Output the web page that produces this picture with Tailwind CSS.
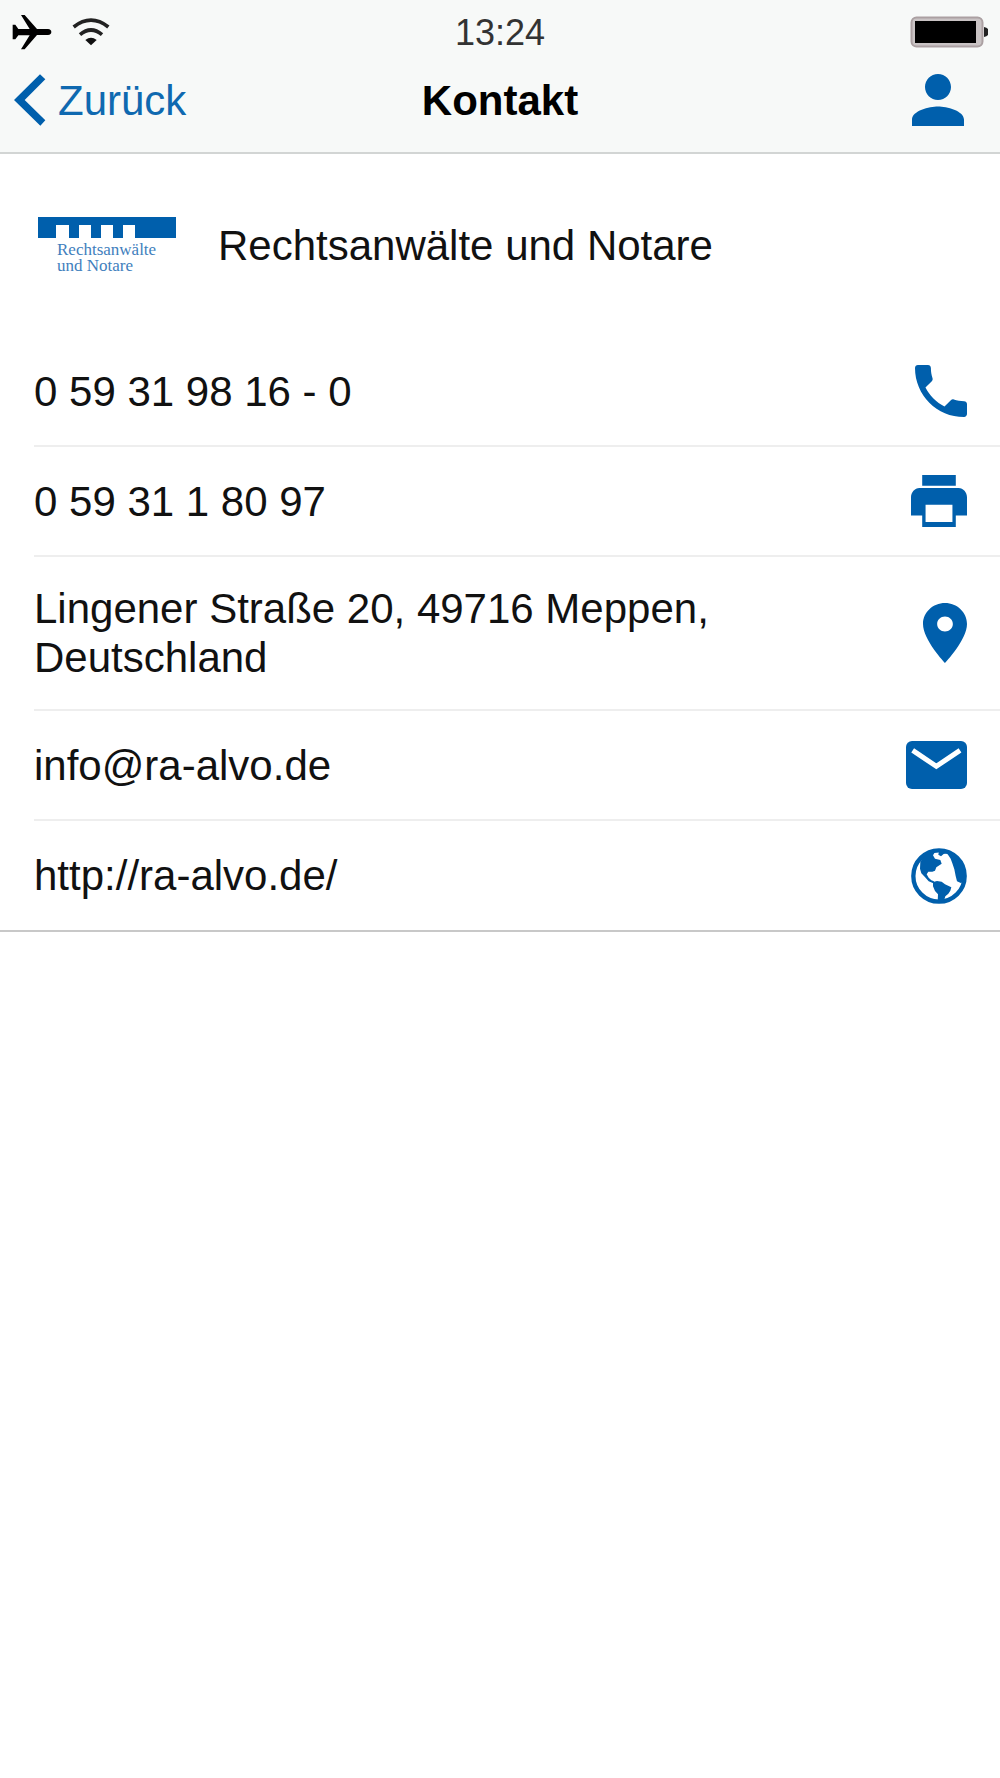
<!DOCTYPE html>
<html lang="de">
<head>
    <meta charset="UTF-8">
    <meta name="viewport" content="width=device-width, initial-scale=1.0">
    <title>Kontakt</title>
    <script src="https://cdn.jsdelivr.net/npm/@tailwindcss/browser@4"></script>
</head>
<body class="min-h-screen bg-white font-['Liberation_Sans',Arial,sans-serif] text-[42px] leading-[49px] text-[#111111]">

    <header class="border-b-2 border-[#d2d5d4] bg-[#f7f9f8]">
        <!-- Status bar -->
        <div class="grid h-16 grid-cols-3 items-center px-3">
            <div class="flex items-center gap-5">
                <svg class="h-9 w-10" viewBox="0 0 120 108" fill="#000" aria-label="Flugmodus">
                    <path d="M2 32h8l9 13h34L27 3h11l37 42h33q10 1 10 9t-10 9H75L38 106H27L53 64H19l-9 12H2z"/>
                </svg>
                <svg class="h-7 w-[38px]" viewBox="0 0 114 84" fill="none" stroke="#222" stroke-width="11" aria-label="WLAN">
                    <path d="M5 27Q57-14 109 27"/>
                    <path d="M24 50Q57 22 90 50"/>
                    <path d="M40 66Q57 52 74 66L57 82z" fill="#111" stroke="none"/>
                </svg>
            </div>
            <time class="text-center text-[36px] text-[#333333]">13:24</time>
            <svg class="h-8 w-[78px] justify-self-end" viewBox="0 0 78 32" aria-label="Batterie">
                <rect x="1.5" y="1.5" width="71" height="29" rx="5" fill="#c9c3c4" stroke="#aba0a2" stroke-width="2"/>
                <rect x="5" y="5" width="61" height="22"/>
                <path d="M74 11q5 1 5 5t-5 5z" fill="#222"/>
            </svg>
        </div>
        <!-- Navigation bar -->
        <nav class="grid h-[88px] grid-cols-[1fr_auto_1fr] items-center pb-4">
            <a href="#" class="flex items-center gap-3 pl-3.5 text-[#0f69b0]">
                <svg class="h-[52px] w-8" viewBox="0 0 96 156" fill="#005fac">
                    <path d="M0 78L78 1l16 15-62 62 62 61-15 16z"/>
                </svg>
                Zurück
            </a>
            <h1 class="text-center font-bold text-black">Kontakt</h1>
            <button type="button" class="mr-9 justify-self-end" aria-label="Profil">
                <svg class="size-[52px]" viewBox="4 4 16 16" fill="#005fac">
                    <path d="M12 12c2.21 0 4-1.79 4-4s-1.79-4-4-4-4 1.79-4 4 1.79 4 4 4zm0 2c-2.67 0-8 1.34-8 4v2h16v-2c0-2.66-5.33-4-8-4z"/>
                </svg>
            </button>
        </nav>
    </header>

    <main class="border-b-2 border-[#c8c8c8]">
        <section class="flex h-[183px] items-center gap-[42px] pl-[38px]">
            <div class="w-[138px]">
                <svg class="h-[21px] w-full" viewBox="0 0 138 21" fill="#005fac">
                    <path d="M0 0h138v21H97V8H85v13H75V8H63v13H53V8H41v13H31V8H18v13H0z"/>
                </svg>
                <p class="pb-px pl-[19px] pt-1 font-['Liberation_Serif',serif] text-[17px] leading-4 text-[#3f80bd]">Rechtsanwälte<br>und&nbsp;Notare</p>
            </div>
            <h2>Rechtsanwälte und Notare</h2>
        </section>

        <ul class="pl-[34px]">
            <li class="border-b-2 border-[#eeeeee]">
                <a href="tel:+49593198160" class="flex h-[108px] items-center justify-between pr-[33px]">
                    0 59 31 98 16 - 0
                    <svg class="size-[52px]" viewBox="3 3 18 18" fill="#005fac">
                        <path d="M6.62 10.79c1.44 2.83 3.76 5.14 6.59 6.59l2.2-2.2c.27-.27.67-.36 1.02-.24 1.12.37 2.33.57 3.57.57.55 0 1 .45 1 1V20c0 .55-.45 1-1 1-9.39 0-17-7.61-17-17 0-.55.45-1 1-1h3.5c.55 0 1 .45 1 1 0 1.25.2 2.45.57 3.57.11.35.03.74-.25 1.02l-2.2 2.2z"/>
                    </svg>
                </a>
            </li>
            <li class="border-b-2 border-[#eeeeee]">
                <a href="tel:+49593118097" class="flex h-[108px] items-center justify-between pr-[33px]">
                    0 59 31 1 80 97
                    <svg class="h-[52px] w-14" viewBox="2 3 20 18" preserveAspectRatio="none" fill="#005fac">
                        <path d="M19 7.5H5c-1.66 0-3 1.5-3 3.2V17h4v4h12v-4h4v-6.300c0-1.700-1.340-3.200-3-3.200zm-2.200 11.800H7.200v-6h9.600zM18 3H6v3.700h12z"/>
                    </svg>
                </a>
            </li>
            <li class="border-b-2 border-[#eeeeee]">
                <a href="#" class="flex h-[152px] items-center justify-between pr-[33px]">
                    <span class="max-w-[700px]">Lingener Straße 20, 49716 Meppen, Deutschland</span>
                    <svg class="h-[60px] w-11" viewBox="5 2 14 20" preserveAspectRatio="none" fill="#005fac">
                        <path d="M12 2C8.13 2 5 5.13 5 9c0 5.25 7 13 7 13s7-7.75 7-13c0-3.87-3.13-7-7-7zm0 9.5c-1.38 0-2.5-1.12-2.5-2.5s1.12-2.5 2.5-2.5 2.5 1.12 2.5 2.5-1.12 2.5-2.5 2.5z"/>
                    </svg>
                </a>
            </li>
            <li class="border-b-2 border-[#eeeeee]">
                <a href="mailto:info@ra-alvo.de" class="flex h-[108px] items-center justify-between pr-[33px]">
                    info@ra-alvo.de
                    <svg class="h-12 w-[61px]" viewBox="0 0 183 144">
                        <rect width="183" height="144" rx="18" fill="#005fac"/>
                        <path d="M20 28l71 48 71-48" fill="none" stroke="#fff" stroke-width="15"/>
                    </svg>
                </a>
            </li>
            <li>
                <a href="http://ra-alvo.de/" class="flex h-[109px] items-center justify-between pr-[33px]">
                    http://ra-alvo.de/
                    <svg class="size-14" viewBox="0 0 168 168" fill="#005fac">
                        <circle cx="84" cy="84" r="77" fill="#fff" stroke="#005fac" stroke-width="13"/>
                        <!-- North America with the land bridge, South America, Africa -->
                        <path d="M28 42Q40 20 64 10l8 2-6 10 6 10 16 4 4 11-16 11-4 10-8 3-12 0-5 8 6 10 8 8 8 3-2 6-14-6-12-14-10-10-4-14z"/>
                        <path d="M66 102l12-3 14 2 10 8 19 9-3 10-6 9-9 8-5 16H80l1-22-9-10-6-14z"/>
                        <path d="M84 8l-2 12 8 5 8-7 10-2 11 16 5 14 6 18 4 20 4 16 13 6 10-18-2-28-14-28-26-22z"/>
                    </svg>
                </a>
            </li>
        </ul>
    </main>

</body>
</html>
